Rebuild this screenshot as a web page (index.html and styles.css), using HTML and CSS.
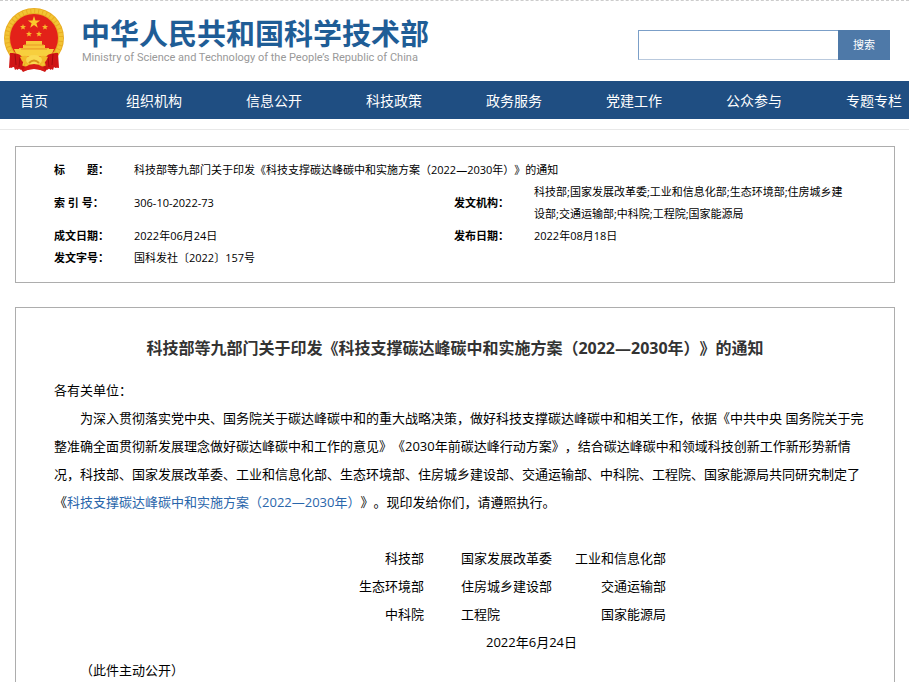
FILE: index.html
```html
<!DOCTYPE html>
<html lang="zh-CN">
<head>
<meta charset="utf-8">
<meta name="viewport" content="width=device-width, initial-scale=1">
<title>中华人民共和国科学技术部</title>
<link rel="stylesheet" href="styles.css">
</head>
<body>
<header class="header">
  <a class="brand" href="#">
    <svg class="emblem" viewBox="0 0 62 66" aria-hidden="true">
      <path d="M9 44 31 50 53 44 55 60 52 61 50 58 48 63 45 61 42 65 31 60 20 65 17 61 14 63 12 58 8 61Z" fill="#c91212"/>
      <circle cx="31" cy="31" r="30" fill="#e9ad22"/>
      <circle cx="31" cy="31" r="27" fill="none" stroke="#f2c434" stroke-width="4" stroke-dasharray="3 1"/>
      <circle cx="31" cy="31" r="24" fill="#e32119"/>
      <path d="M31 9l1.500 4.500h4.700l-3.800 2.800 1.400 4.500-3.800-2.700-3.800 2.700 1.400-4.500-3.800-2.800h4.700z" fill="#fac92c"/>
      <path id="s" d="M20 17l.8 2h2.200l-1.700 1.400.6 2.200-1.900-1.200-1.900 1.200.6-2.200-1.700-1.400h2.200z" fill="#f7b92c"/>
      <use href="#s" x="22"/><use href="#s" x="6" y="7"/><use href="#s" x="16" y="7"/>
      <path d="M23 34h16v4h3v3H20v-3h3z" fill="#f8c73a"/>
      <path d="M16 41h30v4H16z" fill="#f3b935"/>
      <path d="M11 42h40l-3 7H14z" fill="#f7cf3e"/>
      <path d="M21 38h20M18 42h26" stroke="#e99a25" stroke-width="1"/>
      <path d="M7 46q10-1 14 6l-3 11-3-2-3 2-1-3-5 1zM55 46q-10-1-14 6l3 11 3-2 3 2 1-3 5 1z" fill="#d01515"/>
      <path d="M12 47l1 11M50 47l-1 11M17 50l-1 10M45 50l1 10" stroke="#a50c0f"/>
      <path d="M17 50q7-4 14 4 7-8 14-4-3 9-14 8-11 1-14-8z" fill="#f2b929"/>
      <ellipse cx="31" cy="53" rx="8" ry="5" fill="#f9d951"/>
      <path d="M26 56q5-5 10 0" fill="none" stroke="#d89419" stroke-width="2"/>
      <path d="M22 60q9-6 18 0l3 4-12-2-12 2z" fill="#d91c17"/>
    </svg>
    <span class="brand-text">
      <span class="brand-zh">中华人民共和国科学技术部</span>
      <span class="brand-en">Ministry of Science and Technology of the People’s Republic of China</span>
    </span>
  </a>
  <form class="search">
    <input class="search-box" type="text" aria-label="搜索">
    <button class="search-button" type="button">搜索</button>
  </form>
</header>
<nav class="nav">
  <ul class="nav-list">
    <li><a href="#">首页</a></li>
    <li><a href="#">组织机构</a></li>
    <li><a href="#">信息公开</a></li>
    <li><a href="#">科技政策</a></li>
    <li><a href="#">政务服务</a></li>
    <li><a href="#">党建工作</a></li>
    <li><a href="#">公众参与</a></li>
    <li><a href="#">专题专栏</a></li>
  </ul>
</nav>
<main class="main">
  <section class="card meta-card">
    <table class="meta">
      <colgroup><col class="col-label"><col class="col-value"><col class="col-label"><col></colgroup>
      <tr><th scope="row">标　　题：</th><td colspan="3">科技部等九部门关于印发《科技支撑碳达峰碳中和实施方案（2022—2030年）》的通知</td></tr>
      <tr><th scope="row">索 引 号：</th><td>306-10-2022-73</td><th scope="row">发文机构：</th><td>科技部;国家发展改革委;工业和信息化部;生态环境部;住房城乡建设部;交通运输部;中科院;工程院;国家能源局</td></tr>
      <tr><th scope="row">成文日期：</th><td>2022年06月24日</td><th scope="row">发布日期：</th><td>2022年08月18日</td></tr>
      <tr><th scope="row">发文字号：</th><td colspan="3">国科发社〔2022〕157号</td></tr>
    </table>
  </section>
  <article class="card article">
    <h1 class="title">科技部等九部门关于印发《科技支撑碳达峰碳中和实施方案（2022—2030年）》的通知</h1>
    <p>各有关单位：</p>
    <p class="indent">为深入贯彻落实党中央、国务院关于碳达峰碳中和的重大战略决策，做好科技支撑碳达峰碳中和相关工作，依据《中共中央 国务院关于完整准确全面贯彻新发展理念做好碳达峰碳中和工作的意见》《2030年前碳达峰行动方案》，结合碳达峰碳中和领域科技创新工作新形势新情况，科技部、国家发展改革委、工业和信息化部、生态环境部、住房城乡建设部、交通运输部、中科院、工程院、国家能源局共同研究制定了《<a href="#">科技支撑碳达峰碳中和实施方案（2022—2030年）</a>》。现印发给你们，请遵照执行。</p>
    <div class="signatures">
      <span>科技部</span><span>国家发展改革委</span><span>工业和信息化部</span>
      <span>生态环境部</span><span>住房城乡建设部</span><span>交通运输部</span>
      <span>中科院</span><span>工程院</span><span>国家能源局</span>
      <time datetime="2022-06-24">2022年6月24日</time>
    </div>
    <p class="indent">（此件主动公开）</p>
  </article>
</main>
</body>
</html>
```
FILE: styles.css
```css
* { box-sizing: border-box; }
body {
  margin: 0;
  background: #fff;
  color: #000;
  font-family: "Open Sans", "Noto Sans CJK SC", sans-serif;
  font-size: 13px;
  line-height: 28px;
  text-spacing-trim: space-all;
}
a { color: #2a66ab; text-decoration: none; }
p { margin: 0; }
.header {
  display: flex;
  align-items: center;
  justify-content: space-between;
  height: 81px;
  padding: 0 19px 2px 3px;
  border-top: 1px dashed #ccc;
}
.brand { display: flex; align-items: center; gap: 16px; }
.emblem { width: 62px; height: 66px; }
.brand-text { display: flex; flex-direction: column; }
.brand-zh {
  color: #1f5d96;
  font-size: 29px;
  font-weight: 700;
  line-height: 36px;
}
.brand-en {
  padding-left: 1px;
  color: #999;
  font-family: Roboto, sans-serif;
  font-size: 11px;
  line-height: 12px;
  white-space: nowrap;
}
.search { display: flex; margin-top: 10px; }
.search-box {
  width: 200px;
  height: 30px;
  padding: 0 8px;
  border: 1px solid #7b9fc8;
  border-right: 0;
  border-bottom-color: #b9c9dd;
  font: inherit;
}
.search-button {
  width: 52px;
  height: 30px;
  padding: 0 0 2px;
  border: 0;
  background: #4e79a8;
  color: #fff;
  font-family: inherit;
  font-size: 11px;
}
.nav { overflow: hidden; background: #1f4e82; }
.nav-list {
  display: flex;
  margin: 0 0 0 -26px;
  padding: 2px 0 0;
  list-style: none;
}
.nav-list li { flex: 0 0 120px; }
.nav-list a {
  display: block;
  color: #fff;
  font-size: 14px;
  line-height: 36px;
  text-align: center;
}
.main {
  display: flex;
  flex-direction: column;
  gap: 24px;
  margin-top: 10px;
  padding: 16px 14px 24px 15px;
  border-top: 1px solid #e8e8e8;
}
.card { border: 1px solid #adadad; }
.meta-card { padding: 12px 38px 13px; }
.meta {
  width: 100%;
  border-collapse: collapse;
  table-layout: fixed;
  font-size: 11px;
  line-height: 22px;
}
.meta th, .meta td { padding: 0; text-align: left; }
.meta td:last-child { padding-right: 8px; }
.col-label { width: 80px; }
.col-value { width: 320px; }
.article { padding: 26px 28px 40px 38px; }
.title {
  margin: 0 10px 14px 0;
  color: #333;
  font-size: 16px;
  line-height: 28px;
  text-align: center;
}
.indent { text-indent: 26px; }
.signatures {
  display: grid;
  grid-template-columns: 66px 128px 114px;
  margin: 28px 0 0 304px;
}
.signatures span { text-align: right; }
.signatures span:nth-child(3n + 2) { padding-left: 37px; text-align: left; }
.signatures time { grid-column: 2 / 4; padding-left: 62px; }
```
